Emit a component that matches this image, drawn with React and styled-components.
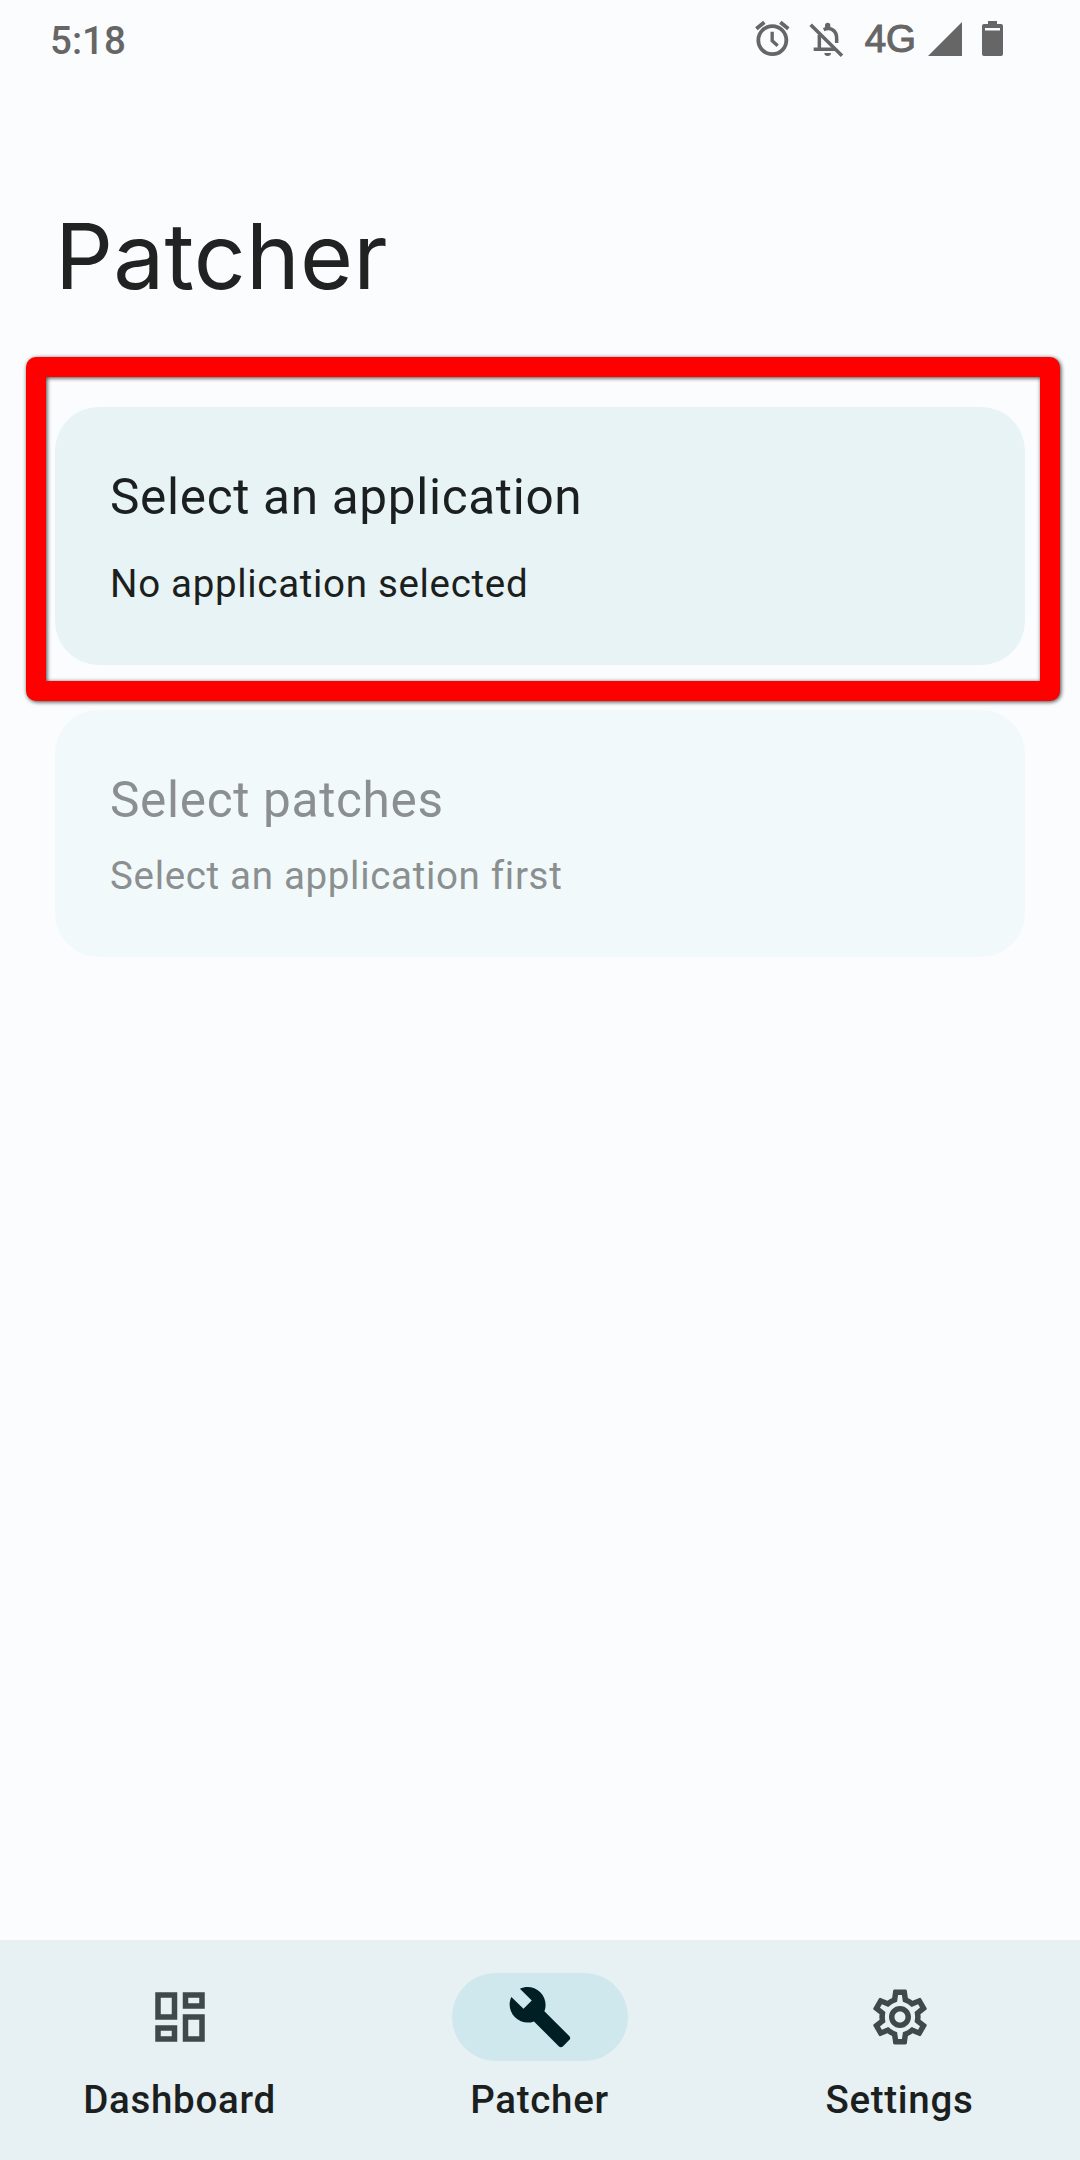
import React from 'react'
import styled, { createGlobalStyle } from 'styled-components'
import { MdBuild, MdOutlineDashboard, MdOutlineSettings } from 'react-icons/md'

const tabs = [
  { label: 'Dashboard', Icon: MdOutlineDashboard },
  { label: 'Patcher', Icon: MdBuild, active: true },
  { label: 'Settings', Icon: MdOutlineSettings },
]

function Alarm() {
  return (
    <svg width="35" height="37" viewBox="28 30 105 111" fill="none">
      <g stroke="currentColor" strokeWidth="11.5">
        <circle cx="80" cy="90.5" r="42" />
        <path d="M32 56L56 37M104 37L128 56" />
        <path d="M79.5 65V92L96 107" strokeWidth="10" />
      </g>
    </svg>
  )
}

function BellOff() {
  return (
    <svg width="35" height="36" viewBox="190 32 105 108" fill="none">
      <g stroke="currentColor" strokeWidth="10.5">
        <path d="M221 74V117M204 117H270" />
        <path d="M234 58C256 48 273 62 273 84V98" />
        <path d="M195 43L289 136" />
      </g>
      <path
        d="M246 37a8 8 0 0 1 8 8v8H238v-8a8 8 0 0 1 8-8ZM236 128h20a10 9 0 0 1-20 0Z"
        fill="currentColor"
      />
    </svg>
  )
}

function Signal() {
  return (
    <svg width="34" height="34" viewBox="0 0 34 34">
      <path d="M34 0V34H0Z" fill="currentColor" />
    </svg>
  )
}

function Battery() {
  return (
    <svg width="21" height="35" viewBox="0 0 21 35">
      <path
        d="M6 0h9v3h4q2 0 2 2v28q0 2-2 2H2q-2 0-2-2V5q0-2 2-2h4ZM3 7v2.5h15V7Z"
        fill="currentColor"
        fillRule="evenodd"
      />
    </svg>
  )
}

export default function App() {
  return (
    <S.Screen>
      <GlobalStyle />
      <S.StatusBar>
        <S.Time>5:18</S.Time>
        <S.StatusIcons>
          <Alarm />
          <BellOff />
          <S.Network>4G</S.Network>
          <Signal />
          <Battery />
        </S.StatusIcons>
      </S.StatusBar>

      <S.Title>Patcher</S.Title>

      <S.Cards>
        <S.Card $gap="35px" $height="258px">
          <S.CardTitle>Select an application</S.CardTitle>
          <S.CardText>No application selected</S.CardText>
          <S.Highlight />
        </S.Card>
        <S.Card $gap="24px" $height="247px" $disabled>
          <S.CardTitle>Select patches</S.CardTitle>
          <S.CardText>Select an application first</S.CardText>
        </S.Card>
      </S.Cards>

      <S.Nav>
        {tabs.map(({ label, Icon, active }) => (
          <S.Tab key={label}>
            <S.Pill $active={active}>
              <Icon size={66} />
            </S.Pill>
            <S.Label>{label}</S.Label>
          </S.Tab>
        ))}
      </S.Nav>
    </S.Screen>
  )
}

const GlobalStyle = createGlobalStyle`
  * {
    box-sizing: border-box;
  }

  body {
    margin: 0;
    background: #fbfcfe;
  }
`

const S = {
  Screen: styled.div`
    display: flex;
    flex-direction: column;
    width: 1080px;
    height: 2160px;
    background: #fbfcfe;
    color: #1b1f20;
    font-family: Roboto, sans-serif;
    overflow: hidden;

    svg {
      display: block;
      flex-shrink: 0;
    }
  `,

  StatusBar: styled.header`
    display: flex;
    align-items: center;
    justify-content: space-between;
    height: 82px;
    padding: 0 77px 0 50px;
    color: #666;
  `,

  Time: styled.span`
    font-size: 38.5px;
    font-weight: 500;
    line-height: 44px;
  `,

  StatusIcons: styled.div`
    display: flex;
    align-items: center;
    margin-top: -5px;

    svg:nth-child(1) {
      margin-right: 19px;
    }

    svg:nth-child(4) {
      margin: 0 20px 0 12px;
    }
  `,

  Network: styled.span`
    margin-left: 21px;
    font-family: 'Liberation Sans', Arial, sans-serif;
    font-size: 38.5px;
    line-height: 44px;
    -webkit-text-stroke: 1.1px currentColor;
  `,

  Title: styled.h1`
    margin: 124px 0 0 55px;
    font-family: Inter, sans-serif;
    font-size: 91px;
    font-weight: 400;
    line-height: 100px;
    letter-spacing: 0.2px;
    color: #212222;
  `,

  Cards: styled.main`
    display: flex;
    flex: 1;
    flex-direction: column;
    gap: 45px;
    padding: 101px 55px 0;
  `,

  Card: styled.section`
    position: relative;
    display: flex;
    flex-direction: column;
    gap: ${p => p.$gap};
    height: ${p => p.$height};
    padding: 61px 55px 0;
    border-radius: 44px;
    background: ${p => (p.$disabled ? '#f1f9fa' : '#e8f3f5')};
    color: ${p => (p.$disabled ? '#8b8f90' : '#1b1f20')};
  `,

  CardTitle: styled.h2`
    margin: 0;
    font-size: 49.5px;
    font-weight: 400;
    line-height: 58px;
    letter-spacing: 0.68px;
  `,

  CardText: styled.p`
    margin: 0;
    font-size: 38.5px;
    line-height: 46px;
    letter-spacing: 0.68px;
  `,

  Highlight: styled.div`
    position: absolute;
    inset: -50px -35px -36px -29px;
    border: 20px solid #f00;
    border-radius: 10px;
    filter: drop-shadow(1px 1px 2px rgba(0, 0, 0, 0.75));
  `,

  Nav: styled.nav`
    display: flex;
    height: 220px;
    padding-top: 33px;
    background: #e7f0f2;
  `,

  Tab: styled.div`
    display: flex;
    flex: 1;
    flex-direction: column;
    align-items: center;
    gap: 16px;
  `,

  Pill: styled.div`
    display: flex;
    align-items: center;
    justify-content: center;
    width: 176px;
    height: 88px;
    border-radius: 44px;
    background: ${p => (p.$active ? '#cee8ee' : 'none')};
    color: ${p => (p.$active ? '#001f24' : '#3f484a')};
  `,

  Label: styled.span`
    margin-right: 1px;
    font-size: 38.5px;
    font-weight: 500;
    line-height: 46px;
    letter-spacing: 0.7px;
  `,
}
